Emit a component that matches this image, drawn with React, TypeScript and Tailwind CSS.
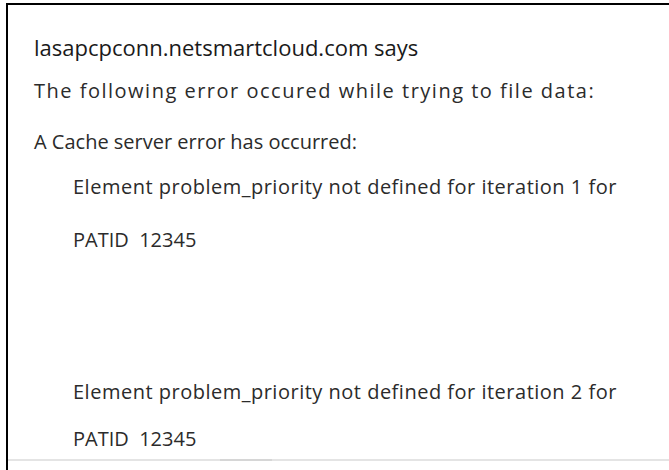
// Browser alert dialog reporting a Cache server error while filing data.

import React from "react";

const ERRORS = [
  { iteration: 1, patid: "12345" },
  { iteration: 2, patid: "12345" },
];

const App: React.FC = () => (
  <div
    className="h-[470px] w-[669px] bg-white pt-[3px] pl-[6px] overflow-hidden"
    style={{ fontFamily: "'Open Sans', 'Noto Sans', sans-serif" }}
  >
    <div className="h-full border-t-2 border-l-2 border-black flex flex-col">
      {/* Message body */}
      <div className="h-[454px] overflow-hidden pl-[26px] pt-[27px] text-[#2b2b2b] whitespace-nowrap">
        <h1 className="text-[22px] leading-[30px] text-[#1a1a1a]">
          lasapcpconn.netsmartcloud.com says
        </h1>
        <p className="mt-[14px] text-[20px] leading-[30px] tracking-[1.5px]">
          The following error occured while trying to file data:
        </p>
        <p className="mt-[21px] text-[20px] leading-[30px]">
          A Cache server error has occurred:
        </p>
        {ERRORS.map((err, i) => (
          <div key={err.iteration} className={i === 0 ? "mt-[15px] pl-[39px]" : "mt-[122px] pl-[39px]"}>
            <p className="text-[20px] leading-[30px] tracking-[0.5px]">
              Element problem_priority not defined for iteration {err.iteration} for
            </p>
            <p className={i === 0 ? "mt-[23px] text-[20px] leading-[30px]" : "mt-[17px] text-[20px] leading-[30px]"}>
              PATID&nbsp;&nbsp;{err.patid}
            </p>
          </div>
        ))}
      </div>

      {/* Horizontal scrollbar track */}
      <div className="h-[2px] bg-[#e4e4e4] flex">
        <div className="ml-[212px] w-[52px] bg-[#d6d6d6]" />
      </div>
    </div>
  </div>
);

export default App;
